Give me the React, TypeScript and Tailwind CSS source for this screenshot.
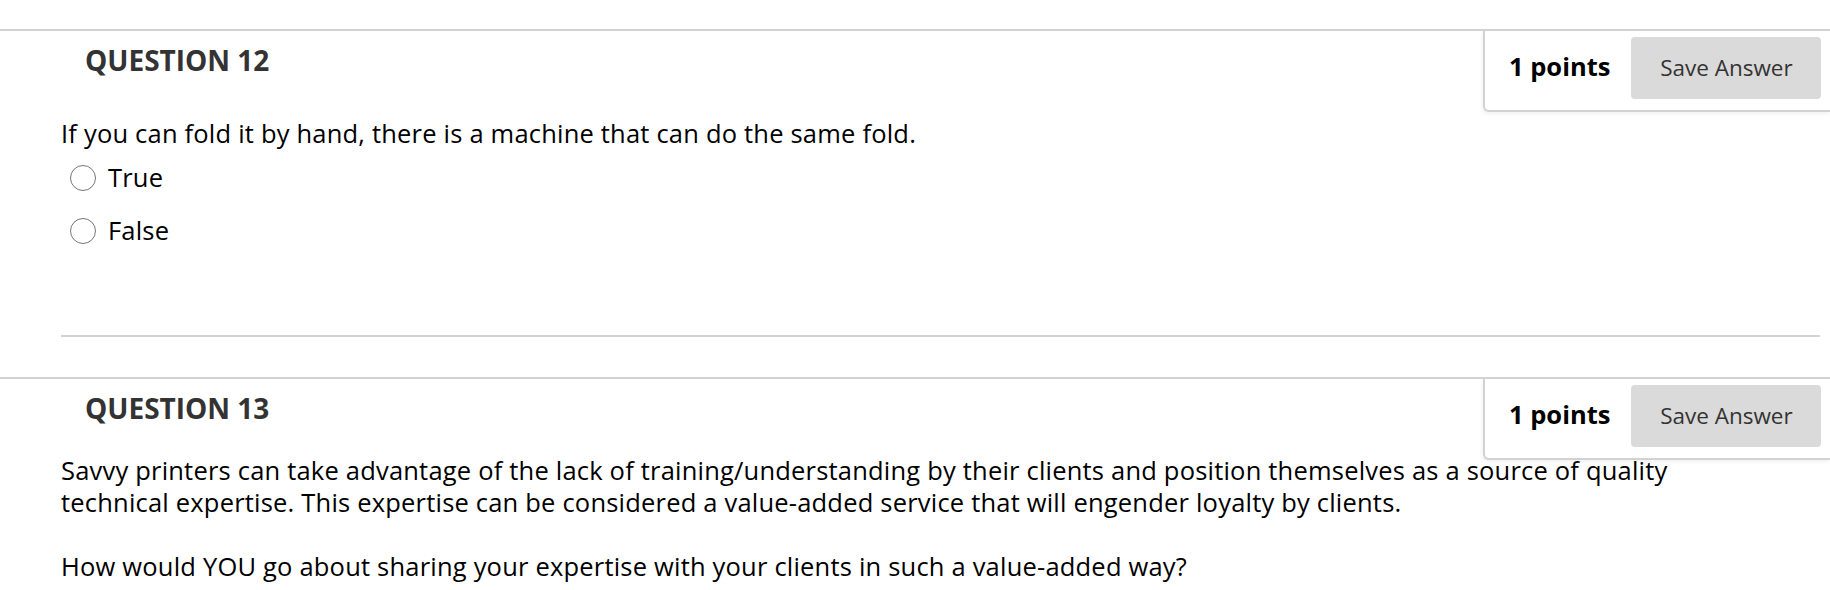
function PointsBox() {
  return (
    <div className="flex items-start shrink-0 w-[347px] h-[81px] pl-[24px] pt-[6px] border-l-2 border-b-2 border-[#d2d2d2] rounded-bl-[6px] shadow-[-1px_2px_4px_rgba(0,0,0,0.06)] bg-white">
      <span className="mt-[12px] text-[25.5px] leading-[34px] font-bold text-black">1 points</span>
      <button className="ml-[21px] w-[190px] h-[62px] rounded-[4px] bg-[#dadada] text-[22.5px] text-[#333]">
        Save Answer
      </button>
    </div>
  );
}

function Option({ label }: { label: string }) {
  return (
    <label className="flex items-center h-[53px] pl-[70px]">
      <input
        type="radio"
        name="q12"
        className="appearance-none w-[26px] h-[26px] rounded-full border-[1.5px] border-[#767676] bg-white"
      />
      <span className="ml-[12px] text-[25.5px] tracking-[0.2px] text-black">{label}</span>
    </label>
  );
}

export default function App() {
  return (
    <div className="w-[1830px] h-[590px] overflow-hidden bg-white pt-[29px] font-['Open_Sans',sans-serif]">
      {/* question 12 */}
      <section className="border-t-2 border-[#d2d2d2]">
        <div className="flex justify-between">
          <h3 className="pl-[85px] pt-[10px] text-[28px] leading-[38px] font-bold text-[#333]">QUESTION 12</h3>
          <PointsBox />
        </div>
        <div className="ml-[61px] mr-[10px] border-b-2 border-[#d2d2d2] pb-[78px]">
          <p className="mt-[5.5px] text-[25.5px] leading-[31.5px] tracking-[0.2px] text-black">
            If you can fold it by hand, there is a machine that can do the same fold.
          </p>
          <div className="mt-[2px] ml-[-61px]">
            <Option label="True" />
            <Option label="False" />
          </div>
        </div>
      </section>

      {/* question 13 */}
      <section className="mt-[40px] border-t-2 border-[#d2d2d2]">
        <div className="flex justify-between">
          <h3 className="pl-[85px] pt-[10px] text-[28px] leading-[38px] font-bold text-[#333]">QUESTION 13</h3>
          <PointsBox />
        </div>
        <div className="ml-[61px] mr-[10px] text-[25.5px] leading-[31.5px] tracking-[0.2px] text-black">
          <p className="-mt-[5px]">
            Savvy printers can take advantage of the lack of training/understanding by their clients and position themselves as a source of quality
            <br />
            technical expertise. This expertise can be considered a value-added service that will engender loyalty by clients.
          </p>
          <p className="mt-[33px]">How would YOU go about sharing your expertise with your clients in such a value-added way?</p>
        </div>
      </section>
    </div>
  );
}
